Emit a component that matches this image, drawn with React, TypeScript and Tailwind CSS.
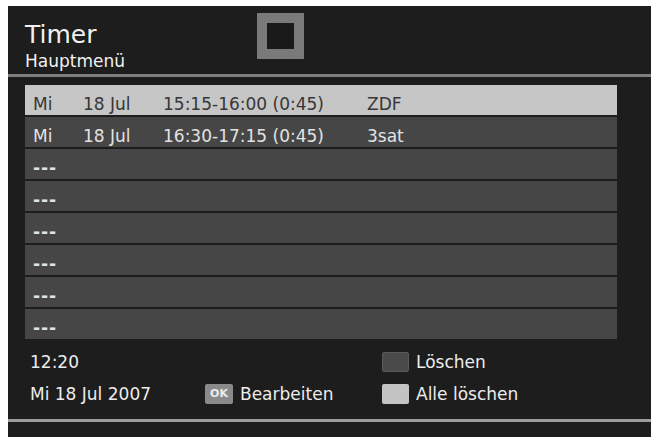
import React from 'react'

type Timer = { day: string; date: string; time: string; channel: string }

const timers: (Timer | null)[] = [
  { day: 'Mi', date: '18 Jul', time: '15:15-16:00 (0:45)', channel: 'ZDF' },
  { day: 'Mi', date: '18 Jul', time: '16:30-17:15 (0:45)', channel: '3sat' },
  null,
  null,
  null,
  null,
  null,
  null,
]

function TimerRow({ timer, active }: { timer: Timer | null; active: boolean }) {
  return (
    <div
      className={`h-[30px] flex pl-[8px] pt-[9px] text-[17px] leading-[20px] ${
        active ? 'bg-[#c6c6c6] text-[#363636]' : 'bg-[#464646] text-[#e2e2e2]'
      }`}
    >
      {timer ? (
        <>
          <span className="w-[50px]">{timer.day}</span>
          <span className="w-[80px]">{timer.date}</span>
          <span className="w-[204px]">{timer.time}</span>
          <span>{timer.channel}</span>
        </>
      ) : (
        <span className="font-bold tracking-[1px]">---</span>
      )}
    </div>
  )
}

export default function App() {
  return (
    <div className="w-[654px] h-[440px] bg-white pt-[6px] pl-[8px] pr-[3px] pb-[3px] font-['DejaVu_Sans',sans-serif]">
      <div className="h-full bg-[#1d1d1d] flex flex-col">
        {/* header */}
        <div className="h-[68px] flex">
          <div className="w-[249px] pl-[17px] pt-[14px] text-[#f0f0f0]">
            <div className="text-[25px] leading-[30px]">Timer</div>
            <div className="text-[17px] leading-[20px] mt-[1px]">Hauptmenü</div>
          </div>
          <div className="mt-[7px] w-[47px] h-[46px] border-[10px] border-[#7a7a7a] bg-[#1a1a1a]" />
        </div>
        <div className="h-[3px] bg-[#7e7e7e]" />

        {/* list */}
        <div className="mt-[8px] ml-[17px] w-[592px] flex flex-col gap-[2px]">
          {timers.map((t, i) => (
            <TimerRow key={i} timer={t} active={i === 0} />
          ))}
        </div>

        {/* footer */}
        <div className="flex-1 pt-[13px] pl-[22px] text-[17px] leading-[20px] text-[#ececec]">
          <div className="flex h-[20px]">
            <span className="w-[175px]">12:20</span>
            <span className="w-[177px]" />
            <div className="flex items-start gap-[7px]">
              <span className="w-[27px] h-[20px] rounded-[2px] bg-[#4a4a4a] border border-[#5a5a5a]" />
              <span>Löschen</span>
            </div>
          </div>
          <div className="flex h-[20px] mt-[12px]">
            <span className="w-[175px]">Mi 18 Jul 2007</span>
            <div className="w-[177px] flex items-start gap-[7px]">
              <span className="w-[28px] h-[20px] rounded-[2px] bg-[#8a8a8a] text-[#ececec] text-[11px] font-bold leading-[20px] text-center">
                OK
              </span>
              <span>Bearbeiten</span>
            </div>
            <div className="flex items-start gap-[7px]">
              <span className="w-[27px] h-[20px] rounded-[2px] bg-[#c4c4c4]" />
              <span>Alle löschen</span>
            </div>
          </div>
        </div>
        <div className="h-[3px] bg-[#9c9c9c]" />
        <div className="h-[15px]" />
      </div>
    </div>
  )
}
